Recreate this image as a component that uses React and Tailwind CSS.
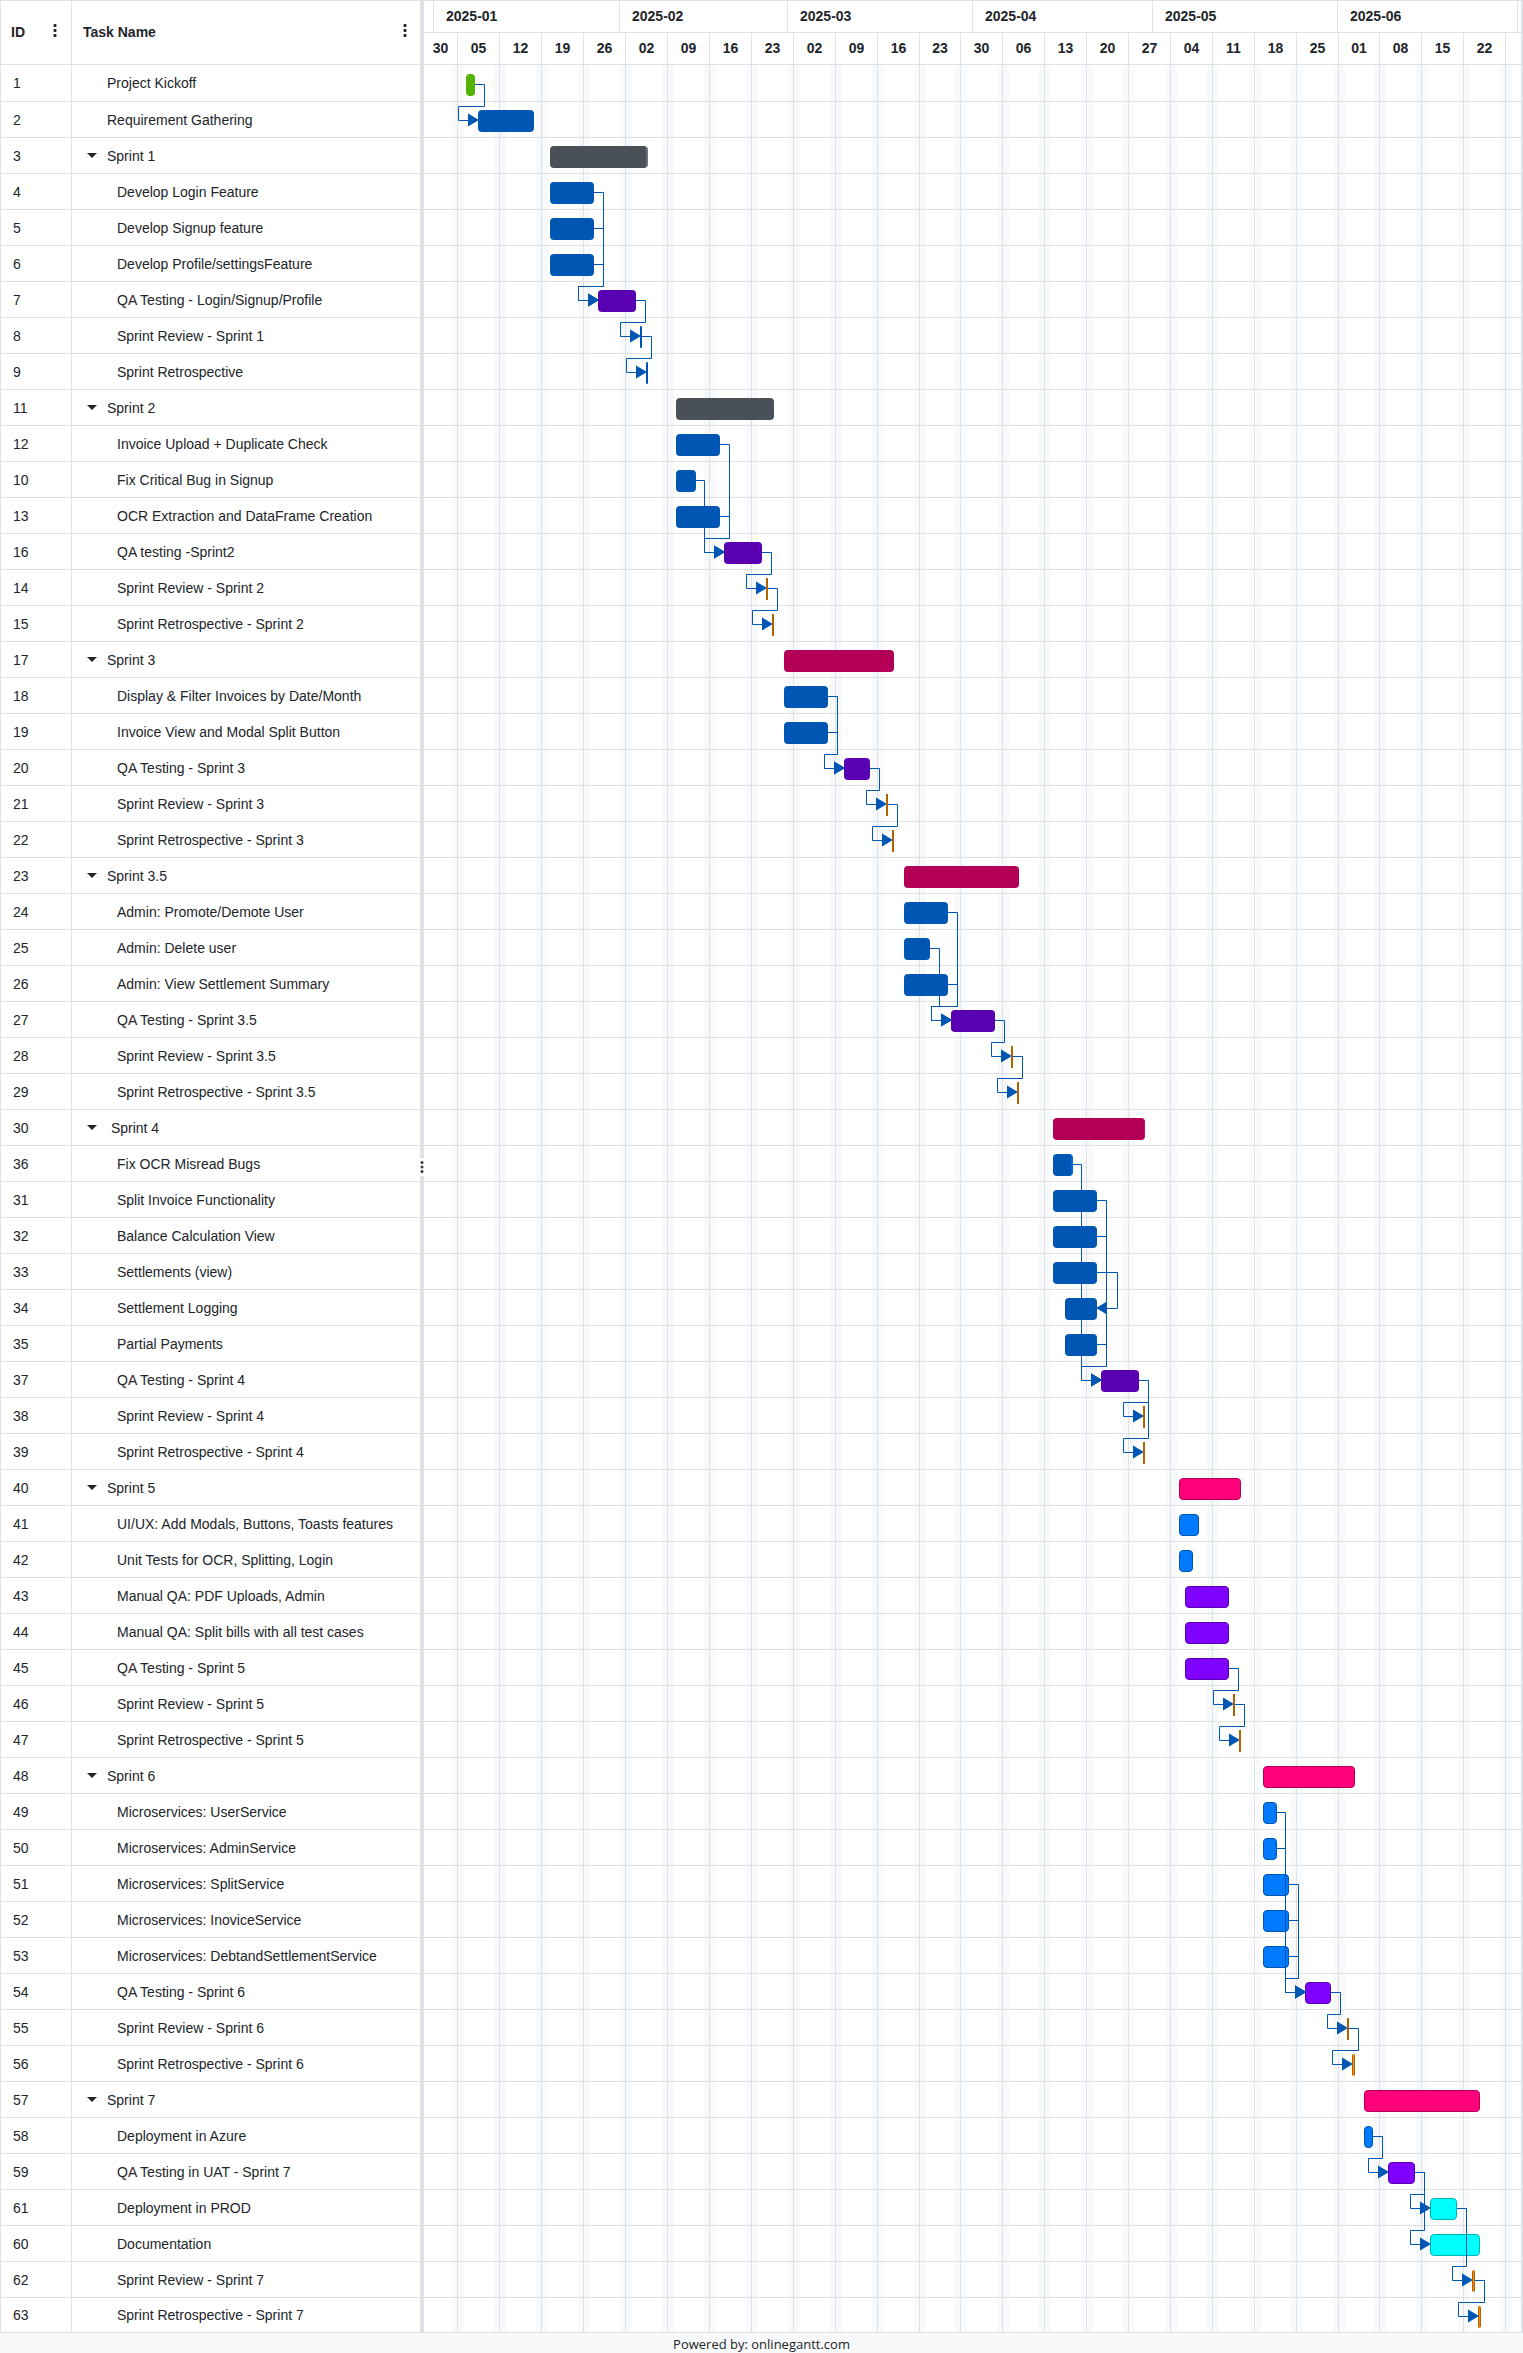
import React from "react";

const WEEKS = [
  ["30", 33], ["05", 42], ["12", 42], ["19", 42], ["26", 42], ["02", 42], ["09", 42], ["16", 42], ["23", 42],
  ["02", 42], ["09", 42], ["16", 42], ["23", 41], ["30", 42], ["06", 42], ["13", 42], ["20", 42], ["27", 42],
  ["04", 42], ["11", 42], ["18", 42], ["25", 42], ["01", 41], ["08", 42], ["15", 42], ["22", 42],
];

const MONTHS = [
  ["", 9], ["2025-01", 186], ["2025-02", 168], ["2025-03", 185], ["2025-04", 180], ["2025-05", 185], ["2025-06", 180],
];

// [id, name, level, start, end, tone]
const TASKS = [
  [1, "Project Kickoff", 0, 42, 51, "greenDone"],
  [2, "Requirement Gathering", 0, 54, 110, "blueDone"],
  [3, "Sprint 1", 1, 126, 224, "grayPart"],
  [4, "Develop Login Feature", 2, 126, 170, "blueDone"],
  [5, "Develop Signup feature", 2, 126, 170, "blueDone"],
  [6, "Develop Profile/settingsFeature", 2, 126, 170, "blueDone"],
  [7, "QA Testing - Login/Signup/Profile", 2, 174, 212, "purpleDone"],
  [8, "Sprint Review - Sprint 1", 2, 216, 218, "blueMark"],
  [9, "Sprint Retrospective", 2, 222, 224, "blueMark"],
  [11, "Sprint 2", 1, 252, 350, "grayDone"],
  [12, "Invoice Upload + Duplicate Check", 2, 252, 296, "blueDone"],
  [10, "Fix Critical Bug in Signup", 2, 252, 272, "blueDone"],
  [13, "OCR Extraction and DataFrame Creation", 2, 252, 296, "blueDone"],
  [16, "QA testing -Sprint2", 2, 300, 338, "purpleDone"],
  [14, "Sprint Review - Sprint 2", 2, 342, 344, "orangeMark"],
  [15, "Sprint Retrospective - Sprint 2", 2, 348, 350, "orangeMark"],
  [17, "Sprint 3", 1, 360, 470, "pinkDone"],
  [18, "Display & Filter Invoices by Date/Month", 2, 360, 404, "blueDone"],
  [19, "Invoice View and Modal Split Button", 2, 360, 404, "blueDone"],
  [20, "QA Testing - Sprint 3", 2, 420, 446, "purpleDone"],
  [21, "Sprint Review - Sprint 3", 2, 462, 464, "orangeMark"],
  [22, "Sprint Retrospective - Sprint 3", 2, 468, 470, "orangeMark"],
  [23, "Sprint 3.5", 1, 480, 595, "pinkDone"],
  [24, "Admin: Promote/Demote User", 2, 480, 524, "blueDone"],
  [25, "Admin: Delete user", 2, 480, 506, "blueDone"],
  [26, "Admin: View Settlement Summary", 2, 480, 524, "blueDone"],
  [27, "QA Testing - Sprint 3.5", 2, 527, 571, "purpleDone"],
  [28, "Sprint Review - Sprint 3.5", 2, 587, 589, "orangeMark"],
  [29, "Sprint Retrospective - Sprint 3.5", 2, 593, 595, "orangeMark"],
  [30, "\u00a0Sprint 4", 1, 629, 721, "pinkPart"],
  [36, "Fix OCR Misread Bugs", 2, 629, 649, "bluePart"],
  [31, "Split Invoice Functionality", 2, 629, 673, "blueDone"],
  [32, "Balance Calculation View", 2, 629, 673, "blueDone"],
  [33, "Settlements (view)", 2, 629, 673, "blueDone"],
  [34, "Settlement Logging", 2, 641, 673, "blueDone"],
  [35, "Partial Payments", 2, 641, 673, "blueDone"],
  [37, "QA Testing - Sprint 4", 2, 677, 715, "purpleDone"],
  [38, "Sprint Review - Sprint 4", 2, 719, 721, "orangeMark"],
  [39, "Sprint Retrospective - Sprint 4", 2, 719, 721, "orangeMark"],
  [40, "Sprint 5", 1, 755, 817, "pinkOpen"],
  [41, "UI/UX: Add Modals, Buttons, Toasts features", 2, 755, 775, "blueOpen"],
  [42, "Unit Tests for OCR, Splitting, Login", 2, 755, 769, "blueOpen"],
  [43, "Manual QA: PDF Uploads, Admin", 2, 761, 805, "purpleOpen"],
  [44, "Manual QA: Split bills with all test cases", 2, 761, 805, "purpleOpen"],
  [45, "QA Testing - Sprint 5", 2, 761, 805, "purpleOpen"],
  [46, "Sprint Review - Sprint 5", 2, 809, 811, "orangeMark"],
  [47, "Sprint Retrospective - Sprint 5", 2, 815, 817, "orangeMark"],
  [48, "Sprint 6", 1, 839, 931, "pinkOpen"],
  [49, "Microservices: UserService", 2, 839, 853, "blueOpen"],
  [50, "Microservices: AdminService", 2, 839, 853, "blueOpen"],
  [51, "Microservices: SplitService", 2, 839, 865, "blueOpen"],
  [52, "Microservices: InoviceService", 2, 839, 865, "blueOpen"],
  [53, "Microservices: DebtandSettlementService", 2, 839, 865, "blueOpen"],
  [54, "QA Testing - Sprint 6", 2, 881, 907, "purpleOpen"],
  [55, "Sprint Review - Sprint 6", 2, 923, 925, "orangeMark"],
  [56, "Sprint Retrospective - Sprint 6", 2, 928, 931, "orangeOpen"],
  [57, "Sprint 7", 1, 940, 1056, "pinkOpen"],
  [58, "Deployment in Azure", 2, 940, 949, "blueOpen"],
  [59, "QA Testing in UAT - Sprint 7", 2, 964, 991, "purpleOpen"],
  [61, "Deployment in PROD", 2, 1006, 1033, "cyanOpen"],
  [60, "Documentation", 2, 1006, 1056, "cyanOpen"],
  [62, "Sprint Review - Sprint 7", 2, 1048, 1051, "orangeOpen"],
  [63, "Sprint Retrospective - Sprint 7", 2, 1054, 1057, "orangeOpen"],
];

// Finished bars sit above the dependency lines, open ones below them.
const BAR_STYLE = {
  greenDone: "z-20 rounded bg-[#55b300]",
  blueDone: "z-20 rounded bg-[#0056b3]",
  bluePart: "z-20 rounded border-r-2 border-[#0069d9] bg-[#0056b3]",
  blueMark: "z-20 rounded-xs bg-[#0056b3]",
  grayDone: "z-20 rounded bg-[#495057]",
  grayPart: "z-20 rounded border-r-2 border-[#6c757d] bg-[#495057]",
  purpleDone: "z-20 rounded bg-[#5a00b3]",
  pinkDone: "z-20 rounded bg-[#b30056]",
  pinkPart: "z-20 rounded border-r border-[#e0006c] bg-[#b30056]",
  orangeMark: "z-20 bg-[#b36200]",
  orangeOpen: "rounded-xs border border-[#b36200] bg-[#ff8c00]",
  pinkOpen: "rounded border border-[#b30056] bg-[#ff007b]",
  blueOpen: "rounded border border-[#0056b3] bg-[#007bff]",
  purpleOpen: "rounded border border-[#5a00b3] bg-[#8000ff]",
  cyanOpen: "rounded border border-[#00b3b3] bg-[#00ffff]",
};

const LINKS = [
  [1, 2], [4, 7], [5, 7], [6, 7], [7, 8], [8, 9],
  [12, 16], [10, 16], [13, 16], [16, 14], [14, 15],
  [18, 20], [19, 20], [20, 21], [21, 22],
  [24, 27], [25, 27], [26, 27], [27, 28], [28, 29],
  [36, 37], [31, 37], [32, 37], [35, 37], [37, 38], [37, 39],
  [45, 46], [46, 47],
  [49, 54], [50, 54], [51, 54], [52, 54], [53, 54], [54, 55], [55, 56],
  [58, 59], [59, 61], [59, 60], [61, 62], [62, 63],
];
const FINISH_LINKS = [[33, 34]];

const ROW = 36;
const place = {};
TASKS.forEach(([id, , , start, end], i) => {
  place[id] = { start, end, mid: i * ROW + 19.5 };
});

function linkPath([from, to]) {
  const a = place[from];
  const b = place[to];
  const inX = b.start - 19.5;
  if (b.start - a.end >= 28) return `M${a.end} ${a.mid}H${inX}V${b.mid}H${b.start - 9}`;
  return `M${a.end} ${a.mid}H${a.end + 9.5}V${b.mid - 14}H${inX}V${b.mid}H${b.start - 9}`;
}

function finishPath([from, to]) {
  const a = place[from];
  const b = place[to];
  const x = Math.max(a.end, b.end) + 20.5;
  return `M${a.end} ${a.mid}H${x}V${b.mid}H${b.end + 9}`;
}

function Links() {
  return (
    <svg className="pointer-events-none absolute inset-0 z-10 h-full w-full" aria-hidden="true">
      <g fill="none" stroke="#0056b3">
        {LINKS.map((l) => <path key={l.join("-")} d={linkPath(l)} />)}
        {FINISH_LINKS.map((l) => <path key={l.join("-")} d={finishPath(l)} />)}
      </g>
      <g fill="#0056b3">
        {LINKS.map(([f, t]) => (
          <path key={`${f}-${t}`} d={`M${place[t].start + 1} ${place[t].mid - 0.5}l-11 -6.5v13z`} />
        ))}
        {FINISH_LINKS.map(([f, t]) => (
          <path key={`${f}-${t}`} d={`M${place[t].end - 1} ${place[t].mid - 0.5}l11 -6.5v13z`} />
        ))}
      </g>
    </svg>
  );
}

function Dots() {
  return (
    <svg width="4" height="13" viewBox="0 0 4 13" fill="#212529" aria-hidden="true">
      <rect x="0.5" y="0" width="3" height="3" rx="1" />
      <rect x="0.5" y="5" width="3" height="3" rx="1" />
      <rect x="0.5" y="10" width="3" height="3" rx="1" />
    </svg>
  );
}

function TaskTable() {
  return (
    <table className="w-105 shrink-0 table-fixed border-separate border-spacing-0 border-l border-[#dee2e6]">
      <colgroup>
        <col className="w-[71px]" />
        <col />
      </colgroup>
      <thead>
        <tr className="h-[65px] text-left">
          <th className="border-y border-r border-[#dee2e6] pb-0.5 pl-[10px] pr-[14px]">
            <div className="flex items-center justify-between">
              ID
              <button type="button" aria-label="ID column menu" className="pb-0.5"><Dots /></button>
            </div>
          </th>
          <th className="border-y border-[#dee2e6] pb-0.5 pl-[11px] pr-[13px]">
            <div className="flex items-center justify-between">
              Task Name
              <button type="button" aria-label="Task Name column menu" className="pb-0.5"><Dots /></button>
            </div>
          </th>
        </tr>
      </thead>
      <tbody>
        {TASKS.map(([id, name, level], i) => (
          <tr key={id} className={i === 0 ? "h-[37px]" : i === TASKS.length - 1 ? "h-[35px]" : "h-9"}>
            <td className="border-b border-r border-[#dee2e6] pl-3">{id}</td>
            <td className="border-b border-[#dee2e6]">
              <div className={level === 2 ? "pl-[45px]" : level === 0 ? "pl-[35px]" : "flex items-center pl-[15px]"}>
                {level === 1 && (
                  <button type="button" aria-label={`Collapse ${name.trim()}`} className="mr-[10px] w-[10px]">
                    <svg width="10" height="5" viewBox="0 0 10 5" fill="#212529" className="block" aria-hidden="true">
                      <path d="M0 0h10L5 5z" />
                    </svg>
                  </button>
                )}
                <span className="whitespace-nowrap">{name}</span>
              </div>
            </td>
          </tr>
        ))}
      </tbody>
    </table>
  );
}

function Splitter() {
  return (
    <div role="separator" aria-orientation="vertical" className="flex w-1 shrink-0 items-center justify-center bg-[#dee2e6]">
      <div className="flex h-[18px] w-1 items-center justify-center bg-white">
        <svg width="4" height="12" viewBox="0 0 4 12" fill="#343a40" aria-hidden="true">
          <circle cx="2" cy="1.5" r="1.5" />
          <circle cx="2" cy="6" r="1.5" />
          <circle cx="2" cy="10.5" r="1.5" />
        </svg>
      </div>
    </div>
  );
}

function Timeline() {
  return (
    <section aria-label="Timeline" className="flex min-w-0 flex-1 flex-col overflow-hidden border-r-2 border-[#dee2e6]">
      <div className="flex h-[33px] border-y border-[#dee2e6] font-bold">
        {MONTHS.map(([label, width], i) => (
          <div
            key={i}
            className={
              label
                ? "flex shrink-0 items-center border-r border-[#dee2e6] pb-0.5 pl-3"
                : "shrink-0 border-r border-[#dee2e6]"
            }
            style={{ width: i === 0 ? width + 1 : width }}
          >
            {label}
          </div>
        ))}
      </div>
      <div className="flex h-8 border-b border-[#dee2e6] font-bold">
        {WEEKS.map(([label, width], i) => (
          <div
            key={i}
            className="flex shrink-0 items-center justify-center border-r border-[#dee2e6] pb-0.5"
            style={{ width: i === 0 ? width + 1 : width }}
          >
            {label}
          </div>
        ))}
      </div>
      <div className="relative flex-1">
        <div className="absolute inset-0 flex" aria-hidden="true">
          {WEEKS.map(([, width], i) => (
            <div
              key={i}
              className="flex shrink-0 justify-between border-r border-[#dee2e6]"
              style={{ width: i === 0 ? width + 1 : width }}
            >
              <div className={i === 0 ? "w-0" : "w-1.5 bg-[#f8f9fa]"} />
              <div className="w-[5px] bg-[#f8f9fa]" />
            </div>
          ))}
          <div className="w-1.5 bg-[#f8f9fa]" />
        </div>
        {TASKS.map(([id, name, , start, end, tone], i) => (
          <div
            key={id}
            className={
              i === 0
                ? "relative h-[37px] border-b border-[#dee2e6] pt-[9px]"
                : i === TASKS.length - 1
                  ? "relative h-[35px] border-b border-[#dee2e6] pt-2"
                  : "relative h-9 border-b border-[#dee2e6] pt-2"
            }
          >
            <div
              title={name.trim()}
              className={`relative h-[22px] ${BAR_STYLE[tone]}`}
              style={{ marginLeft: start, width: end - start }}
            />
          </div>
        ))}
        <Links />
      </div>
    </section>
  );
}

export default function App() {
  return (
    <main className="bg-white font-['Liberation_Sans',Arial,sans-serif] text-sm leading-5 text-[#212529]">
      <div className="flex">
        <TaskTable />
        <Splitter />
        <Timeline />
      </div>
      <footer className="flex h-[21px] items-center justify-center bg-[#f8f9fa] font-['Open_Sans',sans-serif] text-[13px]">
        Powered by: onlinegantt.com
      </footer>
    </main>
  );
}
